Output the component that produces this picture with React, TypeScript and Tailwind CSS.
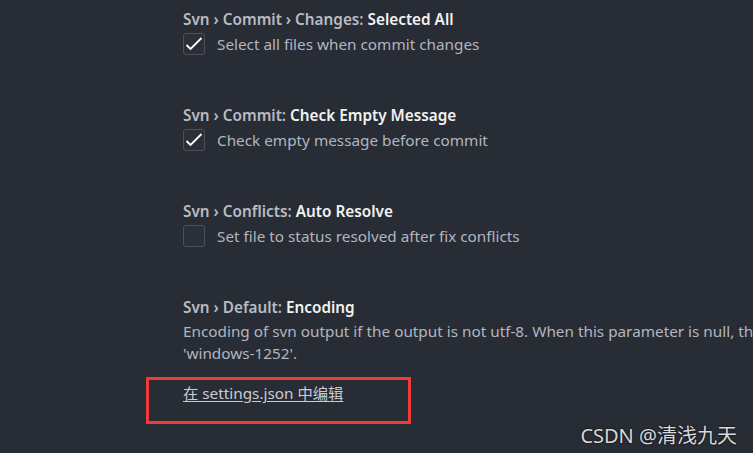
import React from "react";

const font = { fontFamily: '"Noto Sans", "Noto Sans CJK SC", sans-serif' };

const Check = ({ checked }: { checked: boolean }) => (
    <div className="w-[22px] h-[22px] shrink-0 rounded-[3px] border border-[#4b505c] bg-[#2b2f38] flex items-center justify-center">
        {checked && (
            <svg width="18" height="18" viewBox="0 0 18 18" fill="none">
                <path d="M1.5 10 L5.5 14 L16.5 3" stroke="#ffffff" strokeWidth="1.8" />
            </svg>
        )}
    </div>
);

const Title = ({ prefix, name }: { prefix: string; name: string }) => (
    <div className="text-[15.3px] font-semibold leading-[22px] text-[#b9bcc2] whitespace-nowrap">
        {prefix}
        <span className="text-[#f2f2f2]">{name}</span>
    </div>
);

const BoolSetting = ({ prefix, name, desc, checked }: { prefix: string; name: string; desc: string; checked: boolean }) => (
    <div className="h-[96px]">
        <Title prefix={prefix} name={name} />
        <div className="flex items-center gap-[12px] mt-[3px]">
            <Check checked={checked} />
            <span className="text-[15.3px] text-[#b1b6c0] whitespace-nowrap">{desc}</span>
        </div>
    </div>
);

export default function App() {
    return (
        <div className="relative w-[753px] h-[453px] overflow-hidden bg-[#282c34]" style={font}>
            <div className="pl-[183px] pt-[8px]">
                <BoolSetting prefix="Svn › Commit › Changes: " name="Selected All" desc="Select all files when commit changes" checked />
                <BoolSetting prefix="Svn › Commit: " name="Check Empty Message" desc="Check empty message before commit" checked />
                <BoolSetting prefix="Svn › Conflicts: " name="Auto Resolve" desc="Set file to status resolved after fix conflicts" checked={false} />
                <div>
                    <Title prefix="Svn › Default: " name="Encoding" />
                    <div className="text-[15.3px] leading-[22px] text-[#b1b6c0] whitespace-nowrap mt-[2px]">
                        <div>Encoding of svn output if the output is not utf-8. When this parameter is null, the encoding is automatically detected. Example:</div>
                        <div>'windows-1252'.</div>
                    </div>
                    <a className="block mt-[18px] text-[15.3px] text-[#c8ccd4] underline underline-offset-2 whitespace-nowrap">
                        在 settings.json 中编辑
                    </a>
                    <div className="mt-[47px]">
                        <Title prefix="Svn › Default: " name="Format Style" />
                    </div>
                </div>
            </div>

            {/* annotation box */}
            <div className="absolute left-[146px] top-[377px] w-[265px] h-[47px] border-[3px] border-[#f23a3a]" />

            {/* watermark */}
            <div className="absolute right-[16px] top-[421px] text-[20px] text-[#d9d9d9] [text-shadow:0_0_2px_#000]">
                CSDN @清浅九天
            </div>
        </div>
    );
}
